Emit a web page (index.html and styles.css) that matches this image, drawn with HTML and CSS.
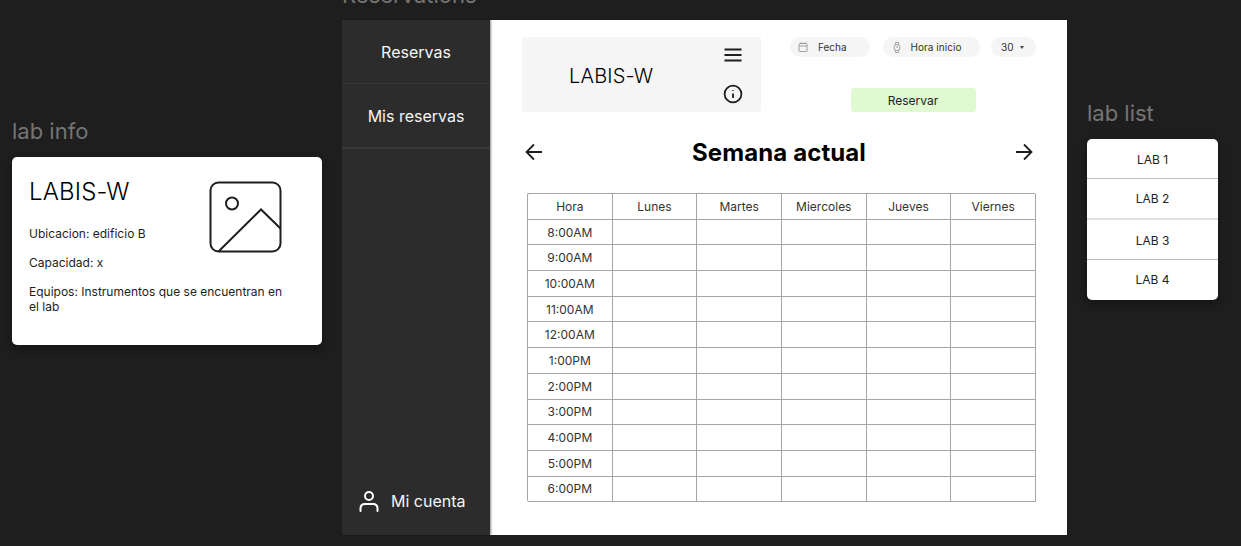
FILE: index.html
```html
<!DOCTYPE html>
<html lang="es">
<head>
    <meta charset="UTF-8">
    <meta name="viewport" content="width=device-width, initial-scale=1.0">
    <title>Reservations</title>
    <link rel="stylesheet" href="styles.css">
</head>
<body>
    <div class="frame frame-info">
        <div class="frame-label">lab info</div>
        <div class="info-card">
            <div class="info-top">
                <div class="info-title">LABIS-W</div>
                <svg class="info-image" width="73" height="73" viewBox="0 0 73 73" fill="none" stroke="#1e1e1e" stroke-width="2">
                    <rect x="1.5" y="1.5" width="70" height="69" rx="8"/>
                    <circle cx="23" cy="22.5" r="6"/>
                    <path d="M9.5 70.5 L52 28.5 L71.5 47.5"/>
                </svg>
            </div>
            <p class="info-line info-ubicacion">Ubicacion: edificio B</p>
            <p class="info-line">Capacidad: x</p>
            <p class="info-line info-equipos">Equipos: Instrumentos que se encuentran en el lab</p>
        </div>
    </div>

    <div class="frame frame-main">
        <div class="frame-label">Reservations</div>
        <div class="window">
            <nav class="sidebar">
                <a class="nav-item nav-first">Reservas</a>
                <a class="nav-item">Mis reservas</a>
                <div class="account">
                    <svg width="22" height="22" viewBox="0 0 22 22" fill="none" stroke="#fff" stroke-width="2" stroke-linecap="round">
                        <circle cx="11" cy="6" r="4"/>
                        <path d="M2.5 21 V18.5 C2.5 15.5 4.5 14 7 14 H15 C17.5 14 19.5 15.5 19.5 18.5 V21"/>
                    </svg>
                    <span>Mi cuenta</span>
                </div>
            </nav>
            <main class="content">
                <div class="top-row">
                    <div class="lab-box">
                        <div class="lab-name">LABIS-W</div>
                        <div class="lab-icons">
                            <svg width="18" height="14" viewBox="0 0 18 14" fill="none" stroke="#1e1e1e" stroke-width="1.8">
                                <path d="M0.5 1.5 H17.5 M0.5 7 H17.5 M0.5 12.5 H17.5"/>
                            </svg>
                            <svg width="20" height="20" viewBox="0 0 20 20" fill="none" stroke="#1e1e1e" stroke-width="1.8">
                                <circle cx="10" cy="10" r="8.4"/>
                                <path d="M10 9.5 V14 M10 6 V6.8"/>
                            </svg>
                        </div>
                    </div>
                    <div class="controls">
                        <div class="pills">
                            <div class="pill pill-fecha">
                                <svg width="10" height="10" viewBox="0 0 10 10" fill="none" stroke="#8a8a8a" stroke-width="0.8">
                                    <rect x="1" y="1.5" width="8" height="8" rx="1"/>
                                    <path d="M1 4 H9 M3 0.3 V2 M7 0.3 V2"/>
                                </svg>
                                <span>Fecha</span>
                            </div>
                            <div class="pill pill-hora">
                                <svg width="8" height="11" viewBox="0 0 8 11" fill="none" stroke="#8a8a8a" stroke-width="0.8">
                                    <circle cx="4" cy="5.5" r="3"/>
                                    <path d="M2.2 2.5 L2.6 0.5 H5.4 L5.8 2.5 M2.2 8.5 L2.6 10.5 H5.4 L5.8 8.5 M4 4 V5.5 H5"/>
                                </svg>
                                <span>Hora inicio</span>
                            </div>
                            <div class="pill pill-min">
                                <span>30</span>
                                <span class="caret"></span>
                            </div>
                        </div>
                        <button class="reservar">Reservar</button>
                    </div>
                </div>

                <div class="week-row">
                    <svg width="18" height="18" viewBox="0 0 18 18" fill="none" stroke="#1e1e1e" stroke-width="1.8">
                        <path d="M17 9 H1.5 M9 1.5 L1.5 9 L9 16.5"/>
                    </svg>
                    <h1>Semana actual</h1>
                    <svg width="18" height="18" viewBox="0 0 18 18" fill="none" stroke="#1e1e1e" stroke-width="1.8">
                        <path d="M1 9 H16.5 M9 1.5 L16.5 9 L9 16.5"/>
                    </svg>
                </div>

                <table class="agenda">
                    <thead>
                        <tr><th>Hora</th><th>Lunes</th><th>Martes</th><th>Miercoles</th><th>Jueves</th><th>Viernes</th></tr>
                    </thead>
                    <tbody>
                        <tr><td>8:00AM</td><td></td><td></td><td></td><td></td><td></td></tr>
                        <tr><td>9:00AM</td><td></td><td></td><td></td><td></td><td></td></tr>
                        <tr><td>10:00AM</td><td></td><td></td><td></td><td></td><td></td></tr>
                        <tr><td>11:00AM</td><td></td><td></td><td></td><td></td><td></td></tr>
                        <tr><td>12:00AM</td><td></td><td></td><td></td><td></td><td></td></tr>
                        <tr><td>1:00PM</td><td></td><td></td><td></td><td></td><td></td></tr>
                        <tr><td>2:00PM</td><td></td><td></td><td></td><td></td><td></td></tr>
                        <tr><td>3:00PM</td><td></td><td></td><td></td><td></td><td></td></tr>
                        <tr><td>4:00PM</td><td></td><td></td><td></td><td></td><td></td></tr>
                        <tr><td>5:00PM</td><td></td><td></td><td></td><td></td><td></td></tr>
                        <tr><td>6:00PM</td><td></td><td></td><td></td><td></td><td></td></tr>
                    </tbody>
                </table>
            </main>
        </div>
    </div>

    <div class="frame frame-list">
        <div class="frame-label">lab list</div>
        <div class="list-card">
            <div class="list-item list-item-low">LAB 1</div>
            <div class="list-item list-item-thick">LAB 2</div>
            <div class="list-item list-item-low">LAB 3</div>
            <div class="list-item list-item-last">LAB 4</div>
        </div>
    </div>
</body>
</html>
```

FILE: styles.css
```css
html, body {
    height: 100%;
}

body {
    position: relative;
    margin: 0;
    overflow: hidden;
    background-color: #1e1e1e;
    font-family: Inter, "Liberation Sans", sans-serif;
    color: #1e1e1e;
}

/* frames sit on a free canvas */
.frame {
    position: absolute;
}

.frame-info {
    left: 12px;
    top: 118px;
    width: 310px;
}

.frame-main {
    left: 342px;
    top: -18px;
    width: 725px;
}

.frame-list {
    left: 1087px;
    top: 100px;
    width: 131px;
}

.frame-label {
    height: 27px;
    margin-bottom: 12px;
    font-size: 22px;
    line-height: 27px;
    color: #757575;
}

.frame-main .frame-label {
    margin-bottom: 11px;
}

/* lab info */
.info-card {
    box-sizing: border-box;
    height: 188px;
    padding: 24px 17px 0;
    background-color: #fff;
    border-radius: 5px;
    box-shadow: 0 4px 10px rgba(0, 0, 0, 0.35);
}

.info-top {
    position: relative;
}

.info-title {
    font-size: 24px;
    font-weight: 300;
    line-height: 21px;
    letter-spacing: 0.15px;
    color: #000;
}

.info-image {
    position: absolute;
    left: 180px;
    top: 0;
}

.info-line {
    margin: 0 0 14px;
    font-size: 12px;
    line-height: 15px;
}

.info-ubicacion {
    margin-top: 24px;
}

.info-equipos {
    padding-right: 15px;
}

/* reservations window */
.window {
    display: flex;
    height: 515px;
}

.sidebar {
    display: flex;
    flex-direction: column;
    width: 148px;
    background-color: #2c2c2c;
    box-shadow: 1px 0 2px rgba(0, 0, 0, 0.45);
    z-index: 1;
}

.nav-item {
    display: flex;
    align-items: center;
    justify-content: center;
    height: 62px;
    padding-top: 1px;
    border-bottom: 2px solid #383838;
    font-size: 16px;
    color: #f5f5f5;
}

.nav-first {
    height: 63px;
    padding-top: 0;
    border-bottom-width: 1px;
}

.account {
    display: flex;
    align-items: center;
    gap: 11px;
    margin-top: auto;
    padding: 0 0 23px 16px;
    font-size: 16px;
    color: #f5f5f5;
}

.content {
    flex: 1;
    box-sizing: border-box;
    padding: 17px 31px 0 32px;
    background-color: #fff;
}

.top-row {
    display: flex;
    justify-content: space-between;
}

.lab-box {
    display: flex;
    justify-content: space-between;
    box-sizing: border-box;
    width: 239px;
    height: 75px;
    padding: 11px 18px 8px 47px;
    background-color: #f5f5f5;
    border-radius: 2px;
}

.lab-name {
    align-self: center;
    font-size: 20px;
    font-weight: 300;
    letter-spacing: 0.2px;
    color: #000;
}

.lab-icons {
    display: flex;
    flex-direction: column;
    align-items: center;
    justify-content: space-between;
}

.controls {
    display: flex;
    flex-direction: column;
    align-items: center;
    width: 246px;
}

.pills {
    display: flex;
    justify-content: space-between;
    width: 100%;
}

.pill {
    display: flex;
    align-items: center;
    box-sizing: border-box;
    height: 20px;
    background-color: #f5f5f5;
    border-radius: 10px;
    font-size: 10px;
    color: #333;
}

.pill-fecha {
    gap: 10px;
    width: 80px;
    padding-left: 8px;
}

.pill-hora {
    gap: 10px;
    width: 97px;
    margin-left: 1px;
    padding-left: 10px;
    letter-spacing: 0.05px;
}

.pill-min {
    gap: 6px;
    width: 45px;
    padding-left: 10px;
}

.caret {
    width: 0;
    height: 0;
    border-left: 2.5px solid transparent;
    border-right: 2.5px solid transparent;
    border-top: 3px solid #444;
}

.reservar {
    display: block;
    width: 125px;
    height: 24px;
    margin-top: 31px;
    padding: 0;
    background-color: #dff9d0;
    border: none;
    border-radius: 3px;
    font-family: inherit;
    font-size: 12px;
    color: #222;
}

.week-row {
    display: flex;
    align-items: center;
    justify-content: space-between;
    height: 30px;
    margin-top: 25px;
    padding: 0 3px 0 3px;
}

.week-row h1 {
    margin: 0;
    font-size: 24px;
    font-weight: 700;
    letter-spacing: 0.1px;
    color: #000;
}

/* agenda table */
.agenda {
    width: 509px;
    height: 309px;
    margin: 26px 0 0 5px;
    border-collapse: separate;
    border-spacing: 0;
    table-layout: fixed;
    border-top: 1px solid #a6a6a6;
    border-left: 1px solid #a6a6a6;
    border-radius: 2px;
    font-size: 12px;
}

.agenda th,
.agenda td {
    height: 24.7px;
    padding: 0;
    border-right: 1px solid #a6a6a6;
    border-bottom: 1px solid #a6a6a6;
    font-weight: 400;
    text-align: center;
    color: #333;
}

/* lab list */
.list-card {
    overflow: hidden;
    background-color: #fff;
    border-radius: 5px;
    box-shadow: 0 4px 10px rgba(0, 0, 0, 0.35);
}

.list-item {
    display: flex;
    align-items: center;
    justify-content: center;
    height: 39px;
    border-bottom: 1px solid #bdbdbd;
    font-size: 12px;
    color: #222;
}

.list-item-low {
    box-sizing: border-box;
    height: 40px;
    padding-top: 2px;
}

.list-item-thick {
    border-bottom: 2px solid #e0e0e0;
}

.list-item-last {
    box-sizing: border-box;
    height: 40px;
    padding-bottom: 2px;
    border-bottom: none;
}
```
